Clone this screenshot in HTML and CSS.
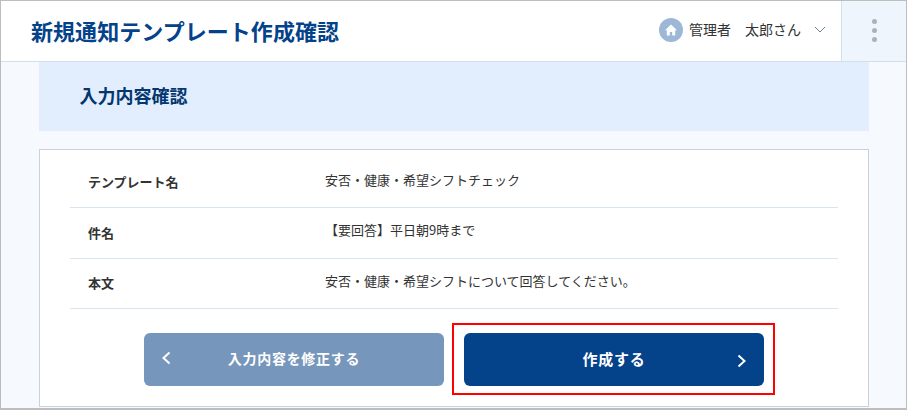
FILE: index.html
```html
<!DOCTYPE html>
<html lang="ja">
  <head>
    <meta charset="UTF-8" />
    <title>新規通知テンプレート作成確認</title>
    <link rel="stylesheet" href="styles.css">
  </head>
  <body>
    <div class="frame">
      <header class="top">
        <h1>新規通知テンプレート作成確認</h1>
        <div class="user">
          <span class="avatar">
            <svg width="14" height="14" viewBox="0 0 14 14"><path d="M7 1.5 1 7.2h1.8V12.5h3V9h2.4v3.5h3V7.2H13z" fill="#fff"/></svg>
          </span>
          <span class="role">管理者</span>
          <span class="name">太郎さん</span>
          <svg class="caret" width="12" height="7" viewBox="0 0 12 7"><path d="M1 1l5 5 5-5" fill="none" stroke="#6f7f92" stroke-width="1"/></svg>
        </div>
        <div class="menu"><i></i><i></i><i></i></div>
      </header>

      <main class="content">
        <h2>入力内容確認</h2>
        <section class="card">
          <div class="row">
            <div class="label">テンプレート名</div>
            <div class="value">安否・健康・希望シフトチェック</div>
          </div>
          <div class="row">
            <div class="label">件名</div>
            <div class="value">【要回答】平日朝9時まで</div>
          </div>
          <div class="row row-last">
            <div class="label">本文</div>
            <div class="value">安否・健康・希望シフトについて回答してください。</div>
          </div>
          <div class="actions">
            <button class="btn btn-back" type="button">
              <svg class="arrow arrow-left" width="9" height="14" viewBox="0 0 9 14"><path d="M7.5 1.5 1.5 7l6 5.5" fill="none" stroke="#fff" stroke-width="2"/></svg>
              入力内容を修正する
            </button>
            <div class="highlight">
              <button class="btn btn-create" type="button">
                作成する
                <svg class="arrow arrow-right" width="9" height="14" viewBox="0 0 9 14"><path d="M1.5 1.5 7.5 7l-6 5.5" fill="none" stroke="#fff" stroke-width="2"/></svg>
              </button>
            </div>
          </div>
        </section>
      </main>
    </div>
  </body>
</html>
```

FILE: styles.css
```css
html,
body {
  margin: 0;
  padding: 0;
  height: 100%;
  overflow: hidden;
}

body {
  font-family: 'Noto Sans CJK JP', 'Noto Sans', sans-serif;
  color: #333;
}

.frame {
  box-sizing: border-box;
  width: 907px;
  height: 410px;
  border: 1px solid #bdbdbd;
  border-bottom-width: 2px;
  background: #f6f9fe;
  overflow: hidden;
}

.top {
  display: flex;
  align-items: center;
  height: 60px;
  background: #fff;
  border-bottom: 1px solid #d3deeb;
}

.top h1 {
  flex: 1;
  margin: -2px 0 0 30px;
  font-size: 22px;
  font-weight: 700;
  letter-spacing: 0.05px;
  color: #04428a;
}

.user {
  display: flex;
  align-items: center;
  margin: -3px 15px 0 0;
  font-size: 14px;
}

.avatar {
  display: flex;
  align-items: center;
  justify-content: center;
  width: 24px;
  height: 24px;
  margin-right: 6px;
  border-radius: 50%;
  background: #9db7d6;
}

.role,
.name {
  margin-top: -2px;
}

.name {
  margin-left: 14px;
}

.caret {
  margin: -1px 0 0 13px;
}

.menu {
  display: flex;
  flex-direction: column;
  align-items: center;
  justify-content: center;
  gap: 4px;
  box-sizing: border-box;
  width: 65px;
  height: 100%;
  padding-bottom: 2px;
  background: #eff5fd;
  border-left: 1px solid #d3deeb;
}

.menu i {
  width: 5px;
  height: 5px;
  border-radius: 50%;
  background: #a8b2bd;
}

.content {
  padding: 0 37px 0 38px;
}

.content h2 {
  margin: 0 0 18px;
  height: 69px;
  padding-left: 40.5px;
  line-height: 67px;
  font-size: 18px;
  font-weight: 700;
  color: #04366f;
  background: #e2eefd;
}

.card {
  height: 258px;
  box-sizing: border-box;
  padding: 7px 30px 0;
  background: #fff;
  border: 1px solid #c8d2de;
}

.row {
  display: flex;
  align-items: center;
  height: 50px;
  border-bottom: 1px solid #d8e4f1;
}

.row-last {
  height: 49px;
}

.label {
  width: 237px;
  margin-top: -2px;
  padding-left: 18px;
  font-size: 13px;
  font-weight: 700;
}

.value {
  font-size: 13px;
  margin-top: -7px;
}

.row:first-child .value {
  margin-top: -5px;
}

.actions {
  display: flex;
  margin: 14px 0 0 74px;
}

.btn {
  position: relative;
  width: 300px;
  height: 53px;
  padding: 0 0 3px;
  border: 0;
  border-radius: 6px;
  font-family: inherit;
  font-weight: 700;
  color: #fff;
}

.btn-back {
  margin: 10px 8px 0 0;
  font-size: 14px;
  letter-spacing: 0.7px;
  background: #7696bb;
}

.btn-create {
  font-size: 15px;
  letter-spacing: 0.75px;
  background: #04428a;
}

.highlight {
  padding: 8px 9px 7px 10px;
  border: 2px solid #f00;
}

.arrow {
  position: absolute;
}

.arrow-left {
  top: 18px;
  left: 18px;
}

.arrow-right {
  top: 21px;
  right: 18px;
}
```
